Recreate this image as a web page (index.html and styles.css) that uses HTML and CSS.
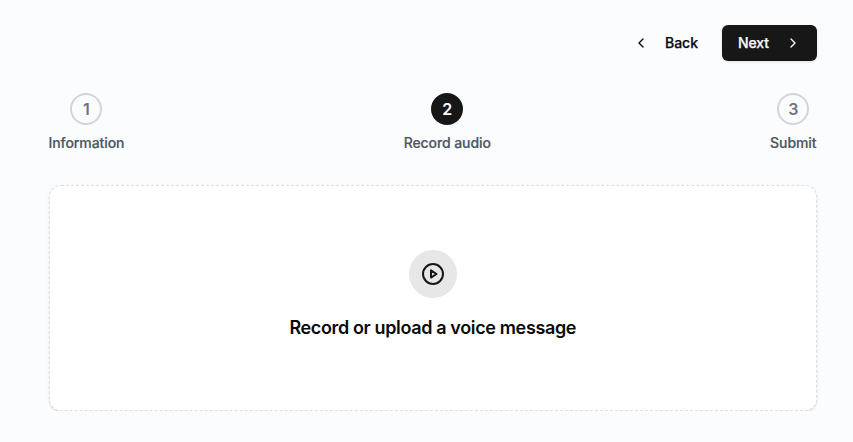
FILE: index.html
```html
<!DOCTYPE html>
<html lang="en">
<head>
<meta charset="utf-8">
<title>Record audio</title>
<link rel="stylesheet" href="styles.css">
</head>
<body>
<main class="page">
  <nav class="actions">
    <button class="btn btn-ghost"><svg class="chevron" viewBox="0 0 24 24"><path d="m15 18-6-6 6-6"/></svg><span>Back</span></button>
    <button class="btn btn-primary"><span>Next</span><svg class="chevron" viewBox="0 0 24 24"><path d="m9 18 6-6-6-6"/></svg></button>
  </nav>
  <ol class="steps">
    <li class="step"><span class="circle">1</span><span class="label">Information</span></li>
    <li class="step"><span class="circle active">2</span><span class="label">Record audio</span></li>
    <li class="step"><span class="circle">3</span><span class="label">Submit</span></li>
  </ol>
  <section class="card">
    <span class="play"><svg viewBox="0 0 24 24"><circle cx="12" cy="12" r="10"/><path d="M10 8.4v7.2l5.5-3.6Z"/></svg></span>
    <h1 class="title">Record or upload a voice message</h1>
  </section>
</main>
</body>
</html>
```
FILE: styles.css
```css
* { box-sizing: border-box; margin: 0; padding: 0; }
body { background: #fbfcfe; font-family: Inter, sans-serif; color: #0a0a0a; }
svg { fill: none; stroke: currentColor; stroke-width: 2; stroke-linecap: round; stroke-linejoin: round; }
.page { padding: 25px 36px 0 48.5px; }
.actions { display: flex; justify-content: flex-end; gap: 8px; }
.btn { display: flex; align-items: center; height: 36px; padding: 0 16px; gap: 16px; border: 0; border-radius: 6px; background: none; color: inherit; font: 500 14px/20px Inter, sans-serif; letter-spacing: -0.06px; -webkit-text-stroke: 0.25px currentColor; }
.btn-primary { background: #171717; color: #fafafa; box-shadow: 0 1px 3px rgb(0 0 0 / 10%); }
.chevron { width: 16px; height: 16px; }
.steps { display: flex; justify-content: space-between; margin: 32px 0.5px 0 0; list-style: none; }
.step { display: flex; flex-direction: column; align-items: center; gap: 8px; }
.circle { display: flex; align-items: center; justify-content: center; width: 32px; height: 32px; border: 2px solid #d1d5db; border-radius: 50%; font-size: 16px; font-weight: 600; line-height: 24px; color: #6b7280; }
.circle.active { border-color: #171717; background: #171717; color: #fff; }
.label { font-size: 14px; line-height: 20px; font-weight: 500; letter-spacing: -0.08px; color: #4b5563; -webkit-text-stroke: 0.2px currentColor; }
.card { display: flex; flex-direction: column; align-items: center; height: 226px; margin-top: 32px; padding-top: 64px; border: 1px dashed #dedfe2; border-radius: 12px; background: #fff; box-shadow: 0 1px 3px rgb(0 0 0 / 10%), 0 1px 2px -1px rgb(0 0 0 / 10%); }
.play { display: flex; align-items: center; justify-content: center; width: 48px; height: 48px; border-radius: 50%; background: #e7e7e7; color: #171717; }
.play svg { width: 24px; height: 24px; }
.title { margin-top: 16px; font-size: 18px; line-height: 28px; font-weight: 600; letter-spacing: -0.36px; }
```
